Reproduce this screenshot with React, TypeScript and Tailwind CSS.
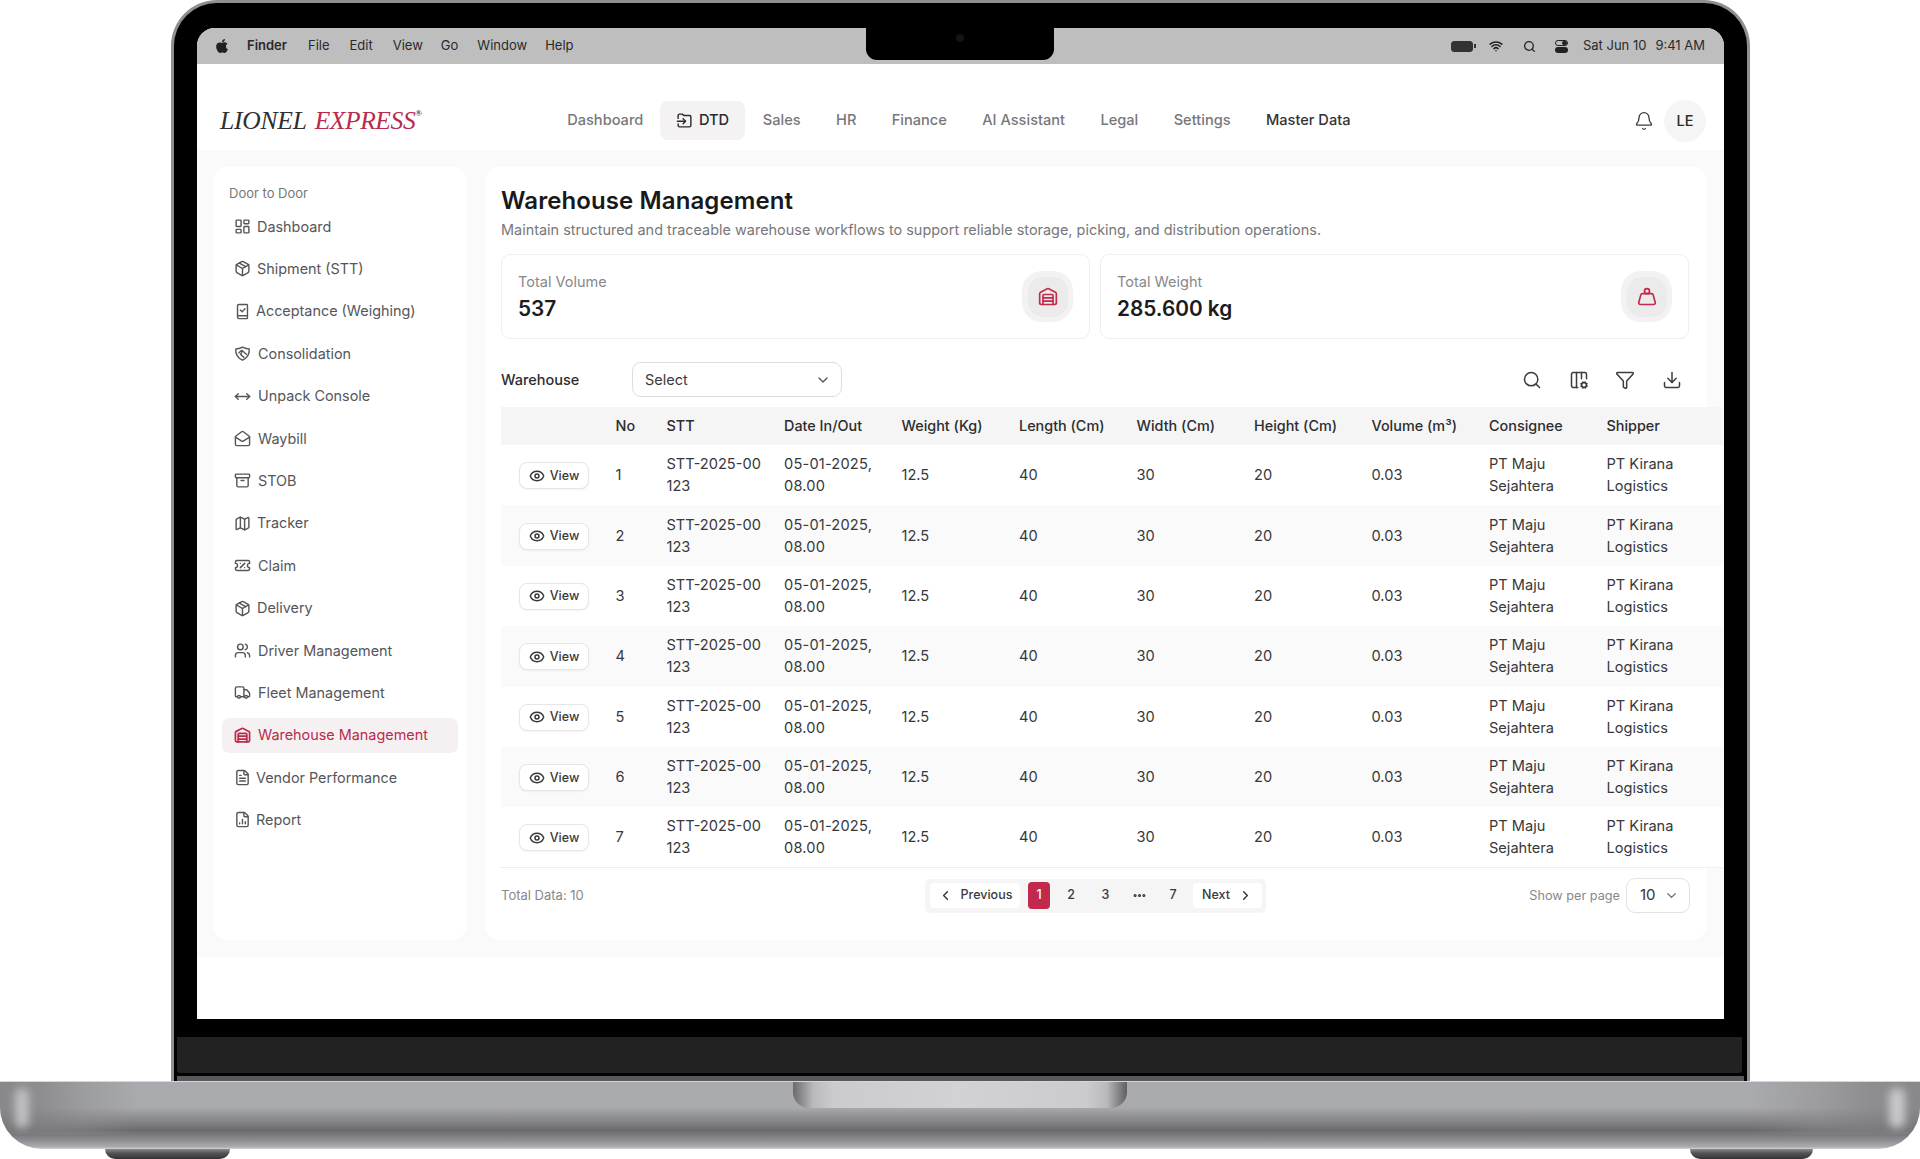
import {
  Archive,
  Bell,
  ChevronDown,
  ChevronLeft,
  ChevronRight,
  Columns3Cog,
  Download,
  Ellipsis,
  Eye,
  FileChartColumn,
  FileText,
  Funnel,
  LayoutDashboard,
  MailOpen,
  Map as MapIcon,
  MoveHorizontal,
  Package,
  Search,
  TicketPercent,
  Truck,
  Users,
  Warehouse,
  Weight,
  Wifi,
} from "lucide-react";
import type { LucideIcon } from "lucide-react";
import { FaApple } from "react-icons/fa";

function AcceptanceIcon({ className }: { className?: string }) {
  return (
    <svg viewBox="0 0 24 24" fill="none" stroke="currentColor" strokeWidth={2} strokeLinecap="round" strokeLinejoin="round" className={className}>
      <path d="M5 18V4a2 2 0 0 1 2-2h11a1 1 0 0 1 1 1v18a1 1 0 0 1-1 1H7a2 2 0 0 1-2-2v-2h14" />
      <path d="m9 10 2.5 2.5L15.5 8" />
    </svg>
  );
}

function ShieldHandshakeIcon({ className }: { className?: string }) {
  return (
    <svg viewBox="0 0 24 24" fill="none" stroke="currentColor" strokeWidth={2} strokeLinecap="round" strokeLinejoin="round" className={className}>
      <path d="M2.5 5.5C6 5.5 9 4.5 12 3c3 1.5 6 2.5 9.5 2.5.5 7.5-3 13-9.5 16-6.500-3-10-8.500-9.500-16Z" />
      <path d="M7 11l4-3.500 6.500 5.500" />
      <path d="M11 11l-2 2 5 4.500" />
    </svg>
  );
}

function DtdIcon({ className }: { className?: string }) {
  return (
    <svg viewBox="0 0 24 24" fill="none" stroke="currentColor" strokeWidth={2} strokeLinecap="round" strokeLinejoin="round" className={className}>
      <path d="M3 9V5a2 2 0 0 1 2-2h4l2 2h8a2 2 0 0 1 2 2v12a2 2 0 0 1-2 2H5a2 2 0 0 1-2-2v-2" />
      <path d="M2 13h11" />
      <path d="m10 9.500 3.500 3.500-3.500 3.500" />
    </svg>
  );
}

type SideItem = { label: string; icon: LucideIcon | typeof AcceptanceIcon; gap: string; active?: boolean };

const sideItems: SideItem[] = [
  { label: "Dashboard", icon: LayoutDashboard, gap: "gap-[6px]" },
  { label: "Shipment (STT)", icon: Package, gap: "gap-[6px]" },
  { label: "Acceptance (Weighing)", icon: AcceptanceIcon, gap: "gap-[5px]" },
  { label: "Consolidation", icon: ShieldHandshakeIcon, gap: "gap-[7px]" },
  { label: "Unpack Console", icon: MoveHorizontal, gap: "gap-[7px]" },
  { label: "Waybill", icon: MailOpen, gap: "gap-[7px]" },
  { label: "STOB", icon: Archive, gap: "gap-[7px]" },
  { label: "Tracker", icon: MapIcon, gap: "gap-[6px]" },
  { label: "Claim", icon: TicketPercent, gap: "gap-[7px]" },
  { label: "Delivery", icon: Package, gap: "gap-[6px]" },
  { label: "Driver Management", icon: Users, gap: "gap-[7px]" },
  { label: "Fleet Management", icon: Truck, gap: "gap-[7px]" },
  { label: "Warehouse Management", icon: Warehouse, gap: "gap-[7px]", active: true },
  { label: "Vendor Performance", icon: FileText, gap: "gap-[5px]" },
  { label: "Report", icon: FileChartColumn, gap: "gap-[5px]" },
];

const topNav = ["Dashboard", "DTD", "Sales", "HR", "Finance", "AI Assistant", "Legal", "Settings", "Master Data"];
const macMenu = ["File", "Edit", "View", "Go", "Window", "Help"];
const macMenuGap = ["mr-[20px]", "mr-[20px]", "mr-[18px]", "mr-[19px]", "mr-[18px]", ""];
const columns = ["", "No", "STT", "Date In/Out", "Weight (Kg)", "Length (Cm)", "Width (Cm)", "Height (Cm)", "Volume (m³)", "Consignee", "Shipper"];

function MenuBar() {
  return (
    <div className="flex h-[36px] shrink-0 items-center justify-between bg-[#bebebe] pl-[17px] pr-[19px] text-[13px] text-[#2a2a2a]">
      <div className="flex items-center">
        <FaApple className="mr-[17px] h-[16px] w-[16px] text-[#222]" />
        <span className="mr-[21px] font-semibold">Finder</span>
        {macMenu.map((m, i) => (
          <span key={m} className={macMenuGap[i]}>
            {m}
          </span>
        ))}
      </div>
      <div className="flex items-center">
        <div className="mr-[13px] flex items-center">
          <div className="h-[11px] w-[22px] rounded-[3px] border border-[#333] bg-[#333]" />
          <div className="ml-[1px] h-[4px] w-[1.5px] bg-[#333]" />
        </div>
        <Wifi className="mr-[20px] h-[14px] w-[14px] text-[#222]" strokeWidth={2.6} />
        <Search className="mr-[19px] h-[13px] w-[13px] text-[#222]" strokeWidth={2.4} />
        <div className="mr-[15px] flex w-[13px] flex-col gap-[1px]">
          <div className="flex h-[6px] justify-end rounded-[3px] border border-[#222]">
            <div className="h-full w-[5px] rounded-full bg-[#222]" />
          </div>
          <div className="h-[6px] rounded-[3px] bg-[#222]" />
        </div>
        <span className="mr-[9px]">Sat Jun 10</span>
        <span>9:41 AM</span>
      </div>
    </div>
  );
}

function Header() {
  return (
    <header className="flex h-[86px] shrink-0 items-center bg-white pl-[23px] pr-[18px] pt-[27px]">
      <div className="flex w-[329.5px] items-start font-['Liberation_Serif',serif] text-[25.5px] italic leading-none">
        <span className="tracking-[-0.2px] text-[#2f2f31]">LIONEL</span>
        <span className="ml-[8px] tracking-[-0.4px] text-[#b92b4a]">EXPRESS</span>
        <span className="mt-[1px] text-[9px] font-bold not-italic text-[#444]">®</span>
      </div>
      <nav className="flex items-center text-[14.6px] font-medium text-[#77777b]">
        {topNav.map((n) =>
          n === "DTD" ? (
            <div key={n} className="ml-[-1px] flex h-[39px] items-center gap-[6px] rounded-[8px] bg-[#f5f2f3] px-[16px] text-[#2b2b2b]">
              <DtdIcon className="h-[17px] w-[17px]" />
              {n}
            </div>
          ) : (
            <div key={n} className={n === "Master Data" ? "px-[17.7px] text-[#333]" : "px-[17.7px]"}>
              {n}
            </div>
          ),
        )}
      </nav>
      <div className="ml-auto flex items-center gap-[10px]">
        <Bell className="h-[20px] w-[20px] text-[#3c3c3c]" strokeWidth={1.6} />
        <div className="flex h-[42px] w-[42px] items-center justify-center rounded-full bg-[#f5f5f5] text-[14.5px] font-medium text-[#2b2b2b]">LE</div>
      </div>
    </header>
  );
}

function Sidebar() {
  return (
    <aside className="w-[254px] shrink-0 rounded-[16px] bg-white pt-[16px]">
      <div className="pl-[16px] text-[13px] leading-[20px] text-[#77777a]">Door to Door</div>
      <div className="mt-[6px] flex flex-col gap-[7.4px] px-[9px]">
        {sideItems.map((s) => {
          const Icon = s.icon;
          return (
            <div
              key={s.label}
              className={`flex h-[35px] items-center rounded-[7px] pl-[12px] text-[14.4px] ${s.gap} ${
                s.active ? "bg-[#f5f1f3] text-[#b92b4a]" : "text-[#55565a]"
              }`}
            >
              <Icon className="h-[17px] w-[17px] shrink-0" strokeWidth={s.active ? 2.4 : 2} />
              {s.label}
            </div>
          );
        })}
      </div>
    </aside>
  );
}

function StatCard({ label, value, icon: Icon }: { label: string; value: string; icon: LucideIcon }) {
  return (
    <div className="flex h-[85px] items-center justify-between rounded-[9px] border border-[#f1eeef] bg-white pl-[16px] pr-[16px]">
      <div>
        <div className="text-[14.5px] leading-[22px] text-[#88888b]">{label}</div>
        <div className="mt-[2px] text-[20.8px] font-semibold leading-[28px] text-[#1c1c1e]">{value}</div>
      </div>
      <div className="flex h-[51px] w-[51px] items-center justify-center rounded-[20px] bg-[#f4f1f2]">
        <div className="flex h-[40px] w-[40px] items-center justify-center rounded-[15px] bg-[#ecebeb]">
          <Icon className="h-[20px] w-[20px] text-[#c22a4d]" strokeWidth={2} />
        </div>
      </div>
    </div>
  );
}

function DataTable() {
  const rows = [1, 2, 3, 4, 5, 6, 7];
  return (
    <table className="w-[1222px] table-fixed border-b border-[#eeeeee] text-left text-[14.6px]">
      <colgroup>
        <col className="w-[106.5px]" />
        <col className="w-[51px]" />
        <col className="w-[117.5px]" />
        <col className="w-[117.5px]" />
        <col className="w-[117.5px]" />
        <col className="w-[117.5px]" />
        <col className="w-[117.5px]" />
        <col className="w-[117.5px]" />
        <col className="w-[117.5px]" />
        <col className="w-[117.5px]" />
        <col className="w-[124.5px]" />
      </colgroup>
      <thead>
        <tr className="h-[38px] bg-[#f5f5f5] text-[14.4px] text-[#2d2d2f]">
          {columns.map((c) => (
            <th key={c} className="px-[8px] font-medium">
              {c}
            </th>
          ))}
        </tr>
      </thead>
      <tbody className="leading-[22px] text-[#38383b]">
        {rows.map((n) => (
          <tr key={n} className={n % 2 === 0 ? "h-[60.4px] bg-[#fafafa]" : "h-[60.4px] bg-white"}>
            <td className="pl-[18px] pt-[1px]">
              <div className="flex h-[27px] w-[70px] items-center justify-center gap-[5px] rounded-[8px] border border-[#e6e6e6] bg-white text-[12.5px] font-medium shadow-[0_1px_2px_rgba(0,0,0,0.05)]">
                <Eye className="h-[16px] w-[16px]" strokeWidth={2.2} />
                View
              </div>
            </td>
            <td className="px-[8px]">{n}</td>
            <td className="px-[8px]">
              STT-2025-00
              <br />
              123
            </td>
            <td className="px-[8px] tracking-[0.2px]">
              05-01-2025,
              <br />
              08.00
            </td>
            <td className="px-[8px]">12.5</td>
            <td className="px-[8px]">40</td>
            <td className="px-[8px]">30</td>
            <td className="px-[8px]">20</td>
            <td className="px-[8px]">0.03</td>
            <td className="px-[8px]">PT Maju Sejahtera</td>
            <td className="px-[8px] pr-[24px]">PT Kirana Logistics</td>
          </tr>
        ))}
      </tbody>
    </table>
  );
}

function Pagination() {
  return (
    <div className="flex h-[34px] w-[341px] items-center rounded-[5px] bg-[#f5f5f5] pl-[5px] text-[12.5px] font-medium text-[#3a3a3d]">
      <div className="flex h-[25px] w-[90px] items-center justify-center gap-[8px] rounded-[4px] bg-white">
        <ChevronLeft className="h-[15px] w-[15px]" strokeWidth={2.4} />
        Previous
      </div>
      <div className="ml-[8px] flex h-[27px] w-[22px] items-center justify-center rounded-[4px] bg-[#c22a4d] text-white">1</div>
      <div className="flex w-[42px] justify-center">2</div>
      <div className="flex w-[27px] justify-center">3</div>
      <div className="flex w-[40px] justify-center">
        <Ellipsis className="h-[15px] w-[15px]" strokeWidth={3} />
      </div>
      <div className="flex w-[28px] justify-center">7</div>
      <div className="ml-[6px] flex h-[25px] w-[69px] items-center justify-center gap-[8px] rounded-[4px] bg-white">
        Next
        <ChevronRight className="h-[15px] w-[15px]" strokeWidth={2.4} />
      </div>
    </div>
  );
}

function MainPanel() {
  return (
    <main className="w-[1222px] shrink-0 rounded-[16px] bg-white pl-[16px] pt-[18px]">
      <h1 className="text-[24px] font-semibold leading-[32px] tracking-[0.1px] text-[#19191b]">Warehouse Management</h1>
      <p className="mt-[3px] text-[14.45px] leading-[20px] text-[#77777a]">
        Maintain structured and traceable warehouse workflows to support reliable storage, picking, and distribution operations.
      </p>
      <div className="mt-[14px] grid w-[1188px] grid-cols-2 gap-[10px]">
        <StatCard label="Total Volume" value="537" icon={Warehouse} />
        <StatCard label="Total Weight" value="285.600 kg" icon={Weight} />
      </div>
      <div className="mt-[23px] flex h-[35px] w-[1188px] items-center">
        <span className="w-[131px] text-[14.5px] font-medium text-[#2d2d2f]">Warehouse</span>
        <div className="flex h-[35px] w-[210px] items-center justify-between rounded-[9px] border border-[#dedede] pl-[12px] pr-[10px] text-[14.5px] text-[#3a3a3d]">
          Select
          <ChevronDown className="h-[16px] w-[16px] text-[#55565a]" />
        </div>
        <div className="ml-auto flex items-center gap-[26.5px] pr-[7.5px] text-[#3c3c3f]">
          <Search className="h-[20px] w-[20px]" strokeWidth={1.8} />
          <Columns3Cog className="h-[20px] w-[20px]" strokeWidth={1.8} />
          <Funnel className="h-[20px] w-[20px]" strokeWidth={1.8} />
          <Download className="h-[20px] w-[20px]" strokeWidth={1.8} />
        </div>
      </div>
      <div className="mt-[10px]">
        <DataTable />
      </div>
      <div className="mt-[10px] flex h-[35px] w-[1189px] items-center">
        <span className="w-[424px] text-[13px] text-[#88888b]">Total Data: 10</span>
        <Pagination />
        <div className="ml-auto flex items-center gap-[6px]">
          <span className="text-[12.7px] text-[#88888b]">Show per page</span>
          <div className="flex h-[35px] w-[64px] items-center justify-between rounded-[9px] border border-[#e2e2e2] pl-[13px] pr-[10px] text-[15px] text-[#333]">
            10
            <ChevronDown className="h-[15px] w-[15px] text-[#66666a]" />
          </div>
        </div>
      </div>
    </main>
  );
}

export default function App() {
  return (
    <div className="flex h-[1159px] w-[1920px] flex-col overflow-hidden bg-white font-[family-name:Inter,sans-serif]">
      {/* lid */}
      <div className="relative ml-[171px] h-[1081px] w-[1579px] shrink-0 rounded-t-[46px] bg-[#8f8f91] px-[3px] pt-[3px]">
        <div className="flex h-full flex-col rounded-t-[43px] bg-black px-[3px] pt-[25px]">
          <div className="ml-[20px] mr-[20px] flex h-[991px] shrink-0 flex-col overflow-hidden rounded-t-[18px] bg-white">
            <MenuBar />
            <Header />
            <div className="flex h-[807px] shrink-0 gap-[18px] bg-[#fafafa] pb-[17px] pl-[16px] pt-[17px]">
              <Sidebar />
              <MainPanel />
            </div>
          </div>
          <div className="mt-[18px] h-[36px] w-[1565px] rounded-b-[3px] bg-[#222222]" />
          <div className="mt-[3px] h-[5px] bg-[#58585a]" />
        </div>
        {/* notch */}
        <div className="absolute left-[695px] top-[25px] flex h-[35px] w-[188px] justify-center rounded-b-[11px] bg-black pt-[9px]">
          <div className="h-[8px] w-[8px] rounded-full bg-[#141416]" />
        </div>
      </div>
      {/* base */}
      <div className="relative h-[68px] shrink-0 overflow-hidden rounded-b-[42px] border-t border-[#d6d6d8] bg-[linear-gradient(180deg,#aaabae_0%,#a9aaad_38%,#7f7f83_62%,#69696e_72%,#8b8b8f_86%,#adadb1_97%,#d4d4d6_100%)]">
        <div className="absolute left-0 top-0 h-[52px] w-[140px] bg-[linear-gradient(90deg,rgba(125,125,127,0.75)_0%,rgba(130,130,132,0.7)_30%,rgba(140,140,143,0.45)_60%,rgba(170,171,174,0)_100%)]" />
        <div className="absolute left-[15px] top-[6px] h-[40px] w-[14px] rounded-full bg-[#c0c0c2] blur-[4px]" />
        <div className="absolute right-0 top-0 h-[52px] w-[170px] bg-[linear-gradient(270deg,rgba(125,125,127,0.75)_0%,rgba(130,130,132,0.7)_30%,rgba(140,140,143,0.45)_60%,rgba(170,171,174,0)_100%)]" />
        <div className="absolute right-[15px] top-[6px] h-[40px] w-[16px] rounded-full bg-[#c8c8ca] blur-[4px]" />
        <div className="absolute left-[793px] top-0 h-[26px] w-[334px] rounded-b-[16px] bg-[linear-gradient(90deg,#6a6a6c_0%,#b9b9bb_6%,#cbcbcd_12%,#d2d2d4_50%,#cbcbcd_88%,#b9b9bb_94%,#5f5f61_100%)]" />
      </div>
      {/* feet */}
      <div className="flex h-[10px] shrink-0 justify-between pl-[105px] pr-[107px]">
        <div className="h-full w-[125px] rounded-b-[10px] bg-[linear-gradient(180deg,#8a8a8c_0%,#555557_40%,#333335_100%)]" />
        <div className="h-full w-[123px] rounded-b-[10px] bg-[linear-gradient(180deg,#8a8a8c_0%,#555557_40%,#333335_100%)]" />
      </div>
    </div>
  );
}
